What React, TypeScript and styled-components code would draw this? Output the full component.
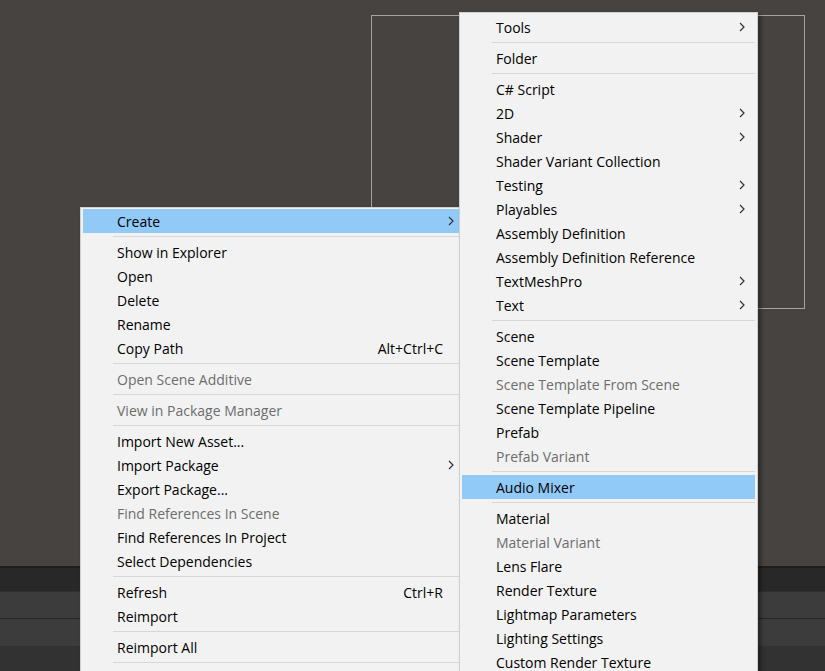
import React from "react";
import styled, { createGlobalStyle } from "styled-components";

const Global = createGlobalStyle`
  html, body { margin: 0; padding: 0; background: #474341; overflow: hidden; }
  #root { width: 825px; height: 671px; overflow: hidden; }
`;

const Page = styled.div`
  position: relative;
  width: 825px;
  height: 671px;
  overflow: hidden;
  display: flex;
  flex-direction: column;
  background: #474341;
  font-family: "Open Sans", "Noto Sans", sans-serif;
`;

const Viewport = styled.div`
  position: relative;
  height: 566px;
  flex: none;
`;

const Outline = styled.div`
  position: absolute;
  left: 371px;
  top: 15px;
  width: 432px;
  height: 292px;
  border: 1px solid #a6a4a3;
`;

const Band = styled.div<{ $h: number; $bg: string; $line?: string }>`
  height: ${(p) => p.$h}px;
  background: ${(p) => p.$bg};
  border-top: ${(p) => (p.$line ? `1px solid ${p.$line}` : "none")};
  flex: none;
`;

const Menu = styled.div<{ $left: number; $top: number; $width: number; $height: number; $padTop: number }>`
  position: absolute;
  left: ${(p) => p.$left}px;
  top: ${(p) => p.$top}px;
  width: ${(p) => p.$width}px;
  height: ${(p) => p.$height}px;
  overflow: hidden;
  box-sizing: border-box;
  padding: ${(p) => p.$padTop}px 2px 0 2px;
  background: #f2f2f2;
  border: 1px solid #cfcfcf;
  border-bottom: none;
  box-shadow: 3px 3px 4px rgba(0, 0, 0, 0.4);
  display: flex;
  flex-direction: column;
`;

const Row = styled.div<{ $active?: boolean; $disabled?: boolean }>`
  height: 24px;
  flex: none;
  display: flex;
  align-items: center;
  padding-left: 34px;
  padding-right: 10px;
  background: ${(p) => (p.$active ? "#91c9f7" : "transparent")};
  color: ${(p) => (p.$disabled ? "#6d6d6d" : "#000")};
  font-size: 14px;
  white-space: nowrap;
`;

const Label = styled.span`
  flex: 1;
`;

const Shortcut = styled.span`
  margin-right: 11px;
`;

const Sep = styled.div`
  height: 7px;
  flex: none;
  display: flex;
  align-items: center;
  padding-left: 30px;
  &::after {
    content: "";
    flex: 1;
    height: 1px;
    background: #d7d7d7;
  }
`;

const Chevron = () => (
  <svg width="6" height="10" viewBox="0 0 6 10">
    <path d="M1 1 L5 5 L1 9" fill="none" stroke="#333" strokeWidth="1.2" />
  </svg>
);

type Item =
  | { sep: true }
  | { label: string; sub?: boolean; disabled?: boolean; active?: boolean; shortcut?: string };

const leftItems: Item[] = [
  { label: "Create", sub: true, active: true },
  { sep: true },
  { label: "Show in Explorer" },
  { label: "Open" },
  { label: "Delete" },
  { label: "Rename" },
  { label: "Copy Path", shortcut: "Alt+Ctrl+C" },
  { sep: true },
  { label: "Open Scene Additive", disabled: true },
  { sep: true },
  { label: "View in Package Manager", disabled: true },
  { sep: true },
  { label: "Import New Asset..." },
  { label: "Import Package", sub: true },
  { label: "Export Package..." },
  { label: "Find References In Scene", disabled: true },
  { label: "Find References In Project" },
  { label: "Select Dependencies" },
  { sep: true },
  { label: "Refresh", shortcut: "Ctrl+R" },
  { label: "Reimport" },
  { sep: true },
  { label: "Reimport All" },
  { sep: true },
];

const rightItems: Item[] = [
  { label: "Tools", sub: true },
  { sep: true },
  { label: "Folder" },
  { sep: true },
  { label: "C# Script" },
  { label: "2D", sub: true },
  { label: "Shader", sub: true },
  { label: "Shader Variant Collection" },
  { label: "Testing", sub: true },
  { label: "Playables", sub: true },
  { label: "Assembly Definition" },
  { label: "Assembly Definition Reference" },
  { label: "TextMeshPro", sub: true },
  { label: "Text", sub: true },
  { sep: true },
  { label: "Scene" },
  { label: "Scene Template" },
  { label: "Scene Template From Scene", disabled: true },
  { label: "Scene Template Pipeline" },
  { label: "Prefab" },
  { label: "Prefab Variant", disabled: true },
  { sep: true },
  { label: "Audio Mixer", active: true },
  { sep: true },
  { label: "Material" },
  { label: "Material Variant", disabled: true },
  { label: "Lens Flare" },
  { label: "Render Texture" },
  { label: "Lightmap Parameters" },
  { label: "Lighting Settings" },
  { label: "Custom Render Texture" },
];

const MenuItems = ({ items }: { items: Item[] }) => (
  <>
    {items.map((it, i) =>
      "sep" in it ? (
        <Sep key={i} />
      ) : (
        <Row key={i} $active={it.active} $disabled={it.disabled}>
          <Label>{it.label}</Label>
          {it.shortcut && <Shortcut>{it.shortcut}</Shortcut>}
          {it.sub && <Chevron />}
        </Row>
      )
    )}
  </>
);

export default function App() {
  return (
    <Page>
      <Global />
      <Viewport>
        <Outline />
      </Viewport>
      <Band $h={2} $bg="#1e1e1e" />
      <Band $h={23} $bg="#282828" />
      <Band $h={26} $bg="#3c3c3c" $line="#303030" />
      <Band $h={27} $bg="#3c3c3c" $line="#262626" />
      <Band $h={27} $bg="#323232" />
      <Menu $left={80} $top={207} $width={387} $height={464} $padTop={1}>
        <MenuItems items={leftItems} />
      </Menu>
      <Menu $left={459} $top={12} $width={299} $height={659} $padTop={2}>
        <MenuItems items={rightItems} />
      </Menu>
    </Page>
  );
}
